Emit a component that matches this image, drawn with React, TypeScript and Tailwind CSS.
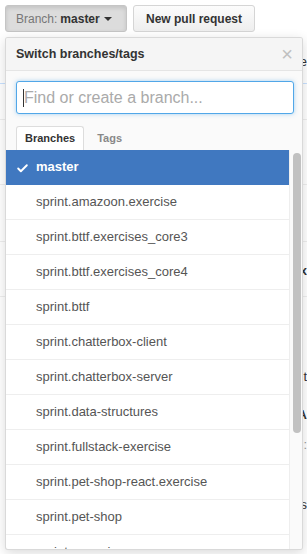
import { Check } from "lucide-react";

const BRANCHES = [
    "master",
    "sprint.amazoon.exercise",
    "sprint.bttf.exercises_core3",
    "sprint.bttf.exercises_core4",
    "sprint.bttf",
    "sprint.chatterbox-client",
    "sprint.chatterbox-server",
    "sprint.data-structures",
    "sprint.fullstack-exercise",
    "sprint.pet-shop-react.exercise",
    "sprint.pet-shop",
    "sprint.recursion",
];

export default function App() {
    return (
        <div className="relative w-[307px] h-[554px] overflow-hidden bg-white font-['Liberation_Sans',Arial,sans-serif] text-[#333]">
            {/* Toolbar */}
            <div className="flex gap-[6px] pl-[5px] pt-[5px]">
                <div className="flex items-center h-[27px] w-[122px] px-[10px] rounded-[3px] border border-[#c5c5c5] bg-[#dcdcdc] shadow-[inset_0_2px_4px_rgba(0,0,0,0.12)] text-[12px]">
                    <span className="text-[#777]">Branch:</span>
                    <span className="ml-[3px] font-bold text-[#333]">master</span>
                    <span className="ml-[4px] mt-[1px] w-0 h-0 border-x-[4px] border-x-transparent border-t-[4px] border-t-[#333]" />
                </div>
                <div className="flex items-center justify-center h-[27px] w-[122px] rounded-[3px] border border-[#d5d5d5] bg-gradient-to-b from-[#fcfcfc] to-[#eeeeee] text-[12px] font-bold text-[#333]">
                    New pull request
                </div>
            </div>

            {/* Page content peeking out behind the menu */}
            <div className="mt-[5px] flex flex-col text-[13px] text-[#333]">
                <div className="h-[10px]" />
                <div className="h-[37px] border-b border-[#c8e1ff] text-right pr-0 leading-[30px]">e</div>
                <div className="h-[36px] border-b border-[#eee]" />
                <div className="h-[65px] border-b border-[#eee]" />
                <div className="h-[57px] border-b border-[#eee]" />
                <div className="h-[55px] border-b border-[#eee] font-bold text-right leading-[58px]">x</div>
                <div className="h-[78px] text-right leading-[160px]">t</div>
                <div className="h-[40px] text-right font-bold leading-[80px]">A</div>
                <div className="h-[60px] text-right leading-[60px] text-[#999]">:</div>
                <div className="h-[60px] text-right leading-[60px]">s</div>
            </div>

            {/* Branch select menu */}
            <div className="absolute left-[5px] top-[37px] w-[298px] h-[513px] flex flex-col rounded-[3px] border border-[rgba(0,0,0,0.15)] bg-white shadow-[0_3px_12px_rgba(0,0,0,0.15)] overflow-hidden">
                <div className="flex items-center justify-between h-[33px] px-[10px] bg-[#f5f5f5] border-b border-[#e5e5e5]">
                    <span className="text-[12.5px] font-bold text-[#333]">Switch branches/tags</span>
                    <span className="text-[20px] leading-none text-[#c0c0c0] mr-[-1px]">×</span>
                </div>

                <div className="bg-[#fafafa] pt-[10px] pl-[10px] pr-[8px]">
                    <div className="flex items-center h-[33px] rounded-[3px] border border-[#51a7e8] bg-white shadow-[0_0_4px_rgba(81,167,232,0.5)] px-[6px]">
                        <span className="w-px h-[18px] bg-[#333]" />
                        <span className="text-[16px] text-[#aaa]">Find or create a branch...</span>
                    </div>
                    <div className="flex mt-[12px] h-[24px] text-[11px] font-bold">
                        <div className="flex items-center px-[8px] bg-white border border-b-0 border-[#ddd] rounded-t-[3px] text-[#333]">Branches</div>
                        <div className="flex items-center px-[13px] text-[#888]">Tags</div>
                    </div>
                </div>

                <div className="flex flex-1 overflow-hidden">
                    <div className="flex flex-col w-[283px] overflow-hidden">
                        {BRANCHES.map((b, i) => (
                            <div
                                key={b}
                                className={`relative shrink-0 flex items-center h-[35px] pl-[30px] border-b text-[13px] ${i === 0 ? "bg-[#4078c0] border-[#4078c0] text-white font-bold" : "border-[#eee] text-[#555]"}`}
                            >
                                {i === 0 && (
                                    <Check className="absolute left-[10px] top-[12px]" size={13} strokeWidth={3.5} color="white" />
                                )}
                                {b}
                            </div>
                        ))}
                    </div>
                    <div className="flex-1 border-l border-[#eee] bg-[#fafafa] pl-[3px] pt-[3px]">
                        <div className="w-[8px] h-[280px] rounded-full bg-[#c1c1c1]" />
                    </div>
                </div>
            </div>
        </div>
    );
}
